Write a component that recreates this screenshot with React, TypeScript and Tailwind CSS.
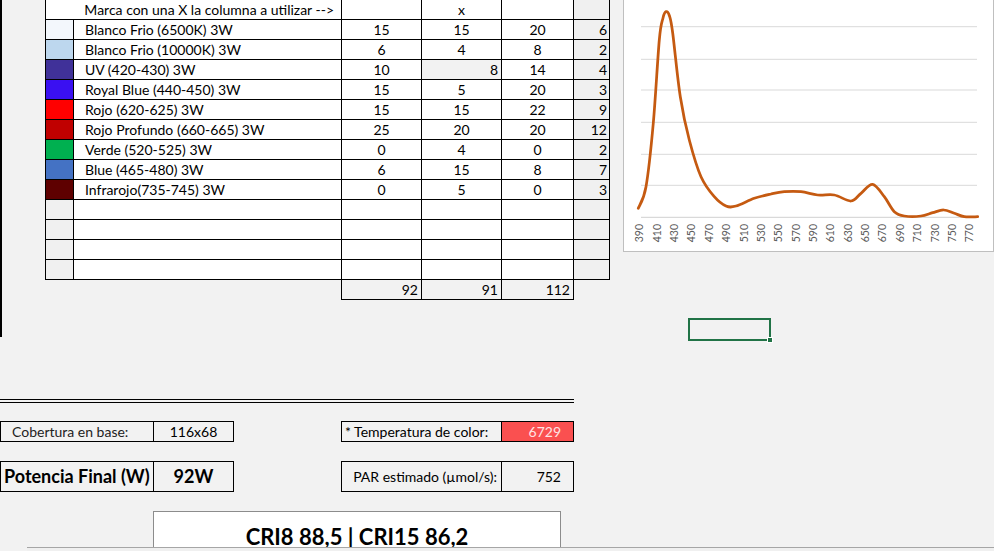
import React from "react";

type Row = {
    name: string;
    swatch: string;
    a: string;
    b: string;
    c: string;
    d: string;
    bRight?: boolean;
};

const rows: Row[] = [
    { name: "Blanco Frio (6500K) 3W", swatch: "bg-[#f3f7fc]", a: "15", b: "15", c: "20", d: "6" },
    { name: "Blanco Frio (10000K) 3W", swatch: "bg-[#bdd7ee]", a: "6", b: "4", c: "8", d: "2" },
    { name: "UV (420-430) 3W", swatch: "bg-[#403199]", a: "10", b: "8", c: "14", d: "4", bRight: true },
    { name: "Royal Blue (440-450) 3W", swatch: "bg-[#3a10f2]", a: "15", b: "5", c: "20", d: "3" },
    { name: "Rojo (620-625) 3W", swatch: "bg-[#ff0000]", a: "15", b: "15", c: "22", d: "9" },
    { name: "Rojo Profundo (660-665) 3W", swatch: "bg-[#c00000]", a: "25", b: "20", c: "20", d: "12" },
    { name: "Verde (520-525) 3W", swatch: "bg-[#00b050]", a: "0", b: "4", c: "0", d: "2" },
    { name: "Blue (465-480) 3W", swatch: "bg-[#4472c4]", a: "6", b: "15", c: "8", d: "7" },
    { name: "Infrarojo(735-745) 3W", swatch: "bg-[#5e0000]", a: "0", b: "5", c: "0", d: "3" },
];

const curve: number[][] = [
    [14.3, 208.3], [22, 186.7], [29.3, 123], [35.3, 40], [39, 18], [42, 11.7], [45.5, 16], [48.7, 33],
    [56.3, 96.7], [65.3, 140], [77, 176.7], [90.3, 196.7], [102, 206], [112, 206], [130.3, 198.3],
    [147, 194], [160.3, 191.7], [177, 191.7], [193.7, 195], [210.3, 195], [227, 201], [237, 193.3],
    [248.7, 184.3], [260.3, 196.7], [270.3, 211.7], [280.3, 216], [297, 216], [308.7, 212.7],
    [319.7, 210], [330.3, 213.3], [340.3, 216.7], [353.7, 216.7],
];

function smoothPath(pts: number[][]) {
    let d = `M${pts[0][0]},${pts[0][1]}`;
    for (let i = 0; i < pts.length - 1; i++) {
        const p0 = pts[i - 1] || pts[i];
        const p1 = pts[i];
        const p2 = pts[i + 1];
        const p3 = pts[i + 2] || p2;
        const c1x = p1[0] + (p2[0] - p0[0]) / 6;
        const c1y = p1[1] + (p2[1] - p0[1]) / 6;
        const c2x = p2[0] - (p3[0] - p1[0]) / 6;
        const c2y = p2[1] - (p3[1] - p1[1]) / 6;
        d += ` C${c1x.toFixed(1)},${c1y.toFixed(1)} ${c2x.toFixed(1)},${c2y.toFixed(1)} ${p2[0]},${p2[1]}`;
    }
    return d;
}

const gridY = [26.7, 59.3, 90, 122.3, 154.3, 185.3];
const labels = Array.from({ length: 20 }, (_, i) => 390 + i * 20);

function SpectrumChart() {
    return (
        <div className="h-[252px] w-[371px] border-b border-l border-r border-[#bfbfbf] bg-white">
            <svg width="369" height="251" viewBox="0 0 369 251">
                {gridY.map((y) => (
                    <line key={y} x1="17" x2="353" y1={y} y2={y} stroke="#d9d9d9" strokeWidth="1" />
                ))}
                <line x1="17" x2="353" y1="217.3" y2="217.3" stroke="#d0d0d0" strokeWidth="1" />
                <path d={smoothPath(curve)} fill="none" stroke="#c55a11" strokeWidth="2.75" strokeLinejoin="round" strokeLinecap="round" />
                {labels.map((l, i) => (
                    <text
                        key={l}
                        transform={`translate(${15.3 + i * 17.37}, 224) rotate(-90)`}
                        textAnchor="end"
                        dominantBaseline="central"
                        fontSize="10.5"
                        fill="#595959"
                        fontFamily="Lato, 'Liberation Sans', sans-serif"
                    >
                        {l}
                    </text>
                ))}
            </svg>
        </div>
    );
}

function LedTable() {
    return (
        <div className="text-[14px] text-black">
            <div className="flex h-5 border-l border-black">
                <div className="w-[296px] border-b border-r border-black bg-white pr-[7px] text-right leading-[19px]">Marca con una X la columna a utilizar --&gt;</div>
                <div className="w-20 border-b border-r border-black bg-white" />
                <div className="w-20 border-b border-r border-black bg-white text-center leading-[19px]">x</div>
                <div className="w-[72px] border-b border-r border-black bg-white" />
                <div className="w-9 border-b border-r border-black bg-[#f0f0f0]" />
            </div>
            {rows.map((r) => (
                <div key={r.name} className="flex h-5 border-l border-black">
                    <div className={`w-[28px] border-b border-r border-black ${r.swatch}`} />
                    <div className="w-[268px] border-b border-r border-black bg-white pl-[11px] leading-[19px]">{r.name}</div>
                    <div className="w-20 border-b border-r border-black bg-white text-center leading-[19px]">{r.a}</div>
                    {r.bRight ? (
                        <div className="w-20 border-b border-r border-black bg-[#f2f2f2] pr-[3px] text-right leading-[19px]">{r.b}</div>
                    ) : (
                        <div className="w-20 border-b border-r border-black bg-white text-center leading-[19px]">{r.b}</div>
                    )}
                    <div className="w-[72px] border-b border-r border-black bg-white text-center leading-[19px]">{r.c}</div>
                    <div className="w-9 border-b border-r border-black bg-[#f0f0f0] pr-[2px] text-right leading-[19px]">{r.d}</div>
                </div>
            ))}
            {[0, 1, 2, 3].map((k) => (
                <div key={k} className="flex h-5 border-l border-black">
                    <div className="w-[28px] border-b border-r border-black bg-[#f0f0f0]" />
                    <div className="w-[268px] border-b border-r border-black bg-white" />
                    <div className="w-20 border-b border-r border-black bg-white" />
                    <div className="w-20 border-b border-r border-black bg-white" />
                    <div className="w-[72px] border-b border-r border-black bg-white" />
                    <div className="w-9 border-b border-r border-black bg-[#f0f0f0]" />
                </div>
            ))}
            <div className="ml-[296px] flex h-5">
                <div className="w-[81px] border-b border-l border-r border-black pr-[3px] text-right leading-[19px]">92</div>
                <div className="w-20 border-b border-r border-black pr-[3px] text-right leading-[19px]">91</div>
                <div className="w-[72px] border-b border-r border-black pr-[3px] text-right leading-[19px]">112</div>
            </div>
        </div>
    );
}

export default function App() {
    return (
        <div className="relative h-[551px] w-[994px] overflow-hidden bg-[#f2f2f2] font-['Lato','Liberation_Sans',sans-serif] text-black">
            <div className="flex items-start">
                <div className="h-[337px] w-[623px] border-l-2 border-black pl-[43px]">
                    <LedTable />
                </div>
                <SpectrumChart />
            </div>

            <div className="mt-[62px] h-[4px] w-[574px] border-y border-black" />

            <div className="mt-[18px] flex h-[21px] text-[14px]">
                <div className="flex w-[234px] border border-black">
                    <div className="w-[153px] border-r border-black pl-[11px] leading-[19px] text-[#222]">Cobertura en base:</div>
                    <div className="flex-1 text-center leading-[19px]">116x68</div>
                </div>
                <div className="ml-[107px] flex w-[233px] border border-black">
                    <div className="w-[160px] border-r border-black pl-[3px] leading-[19px]">* Temperatura de color:</div>
                    <div className="flex-1 bg-[#fa5050] pr-3 text-right leading-[19px] text-[#ffe4e4]">6729</div>
                </div>
            </div>

            <div className="mt-[19px] flex h-[31px]">
                <div className="flex w-[234px] border border-black text-[18px] font-bold">
                    <div className="w-[153px] border-r border-black pl-[3px] leading-[29px]">Potencia Final (W)</div>
                    <div className="flex-1 text-center leading-[29px]">92W</div>
                </div>
                <div className="ml-[107px] flex w-[233px] border border-black text-[14px]">
                    <div className="w-[160px] border-r border-black pr-[4px] text-right leading-[29px]">PAR estimado (µmol/s):</div>
                    <div className="flex-1 pr-3 text-right leading-[29px]">752</div>
                </div>
            </div>

            <div className="ml-[153px] mt-[19px] h-[60px] w-[408px] border border-[#8c8c8c] bg-white pt-[12px] text-center text-[22px] font-bold leading-[26px]">
                CRI8 88,5 | CRI15 86,2
            </div>

            <div className="absolute left-[688px] top-[318px] h-[23px] w-[83px] border-2 border-[#217346]">
                <div className="absolute -bottom-[4px] -right-[4px] h-[6px] w-[6px] border border-white bg-[#217346]" />
            </div>

            <div className="absolute left-[27px] right-0 top-[547px] h-[4px] border-t border-[#a6a6a6] bg-[#f0f0f0]" />
        </div>
    );
}
